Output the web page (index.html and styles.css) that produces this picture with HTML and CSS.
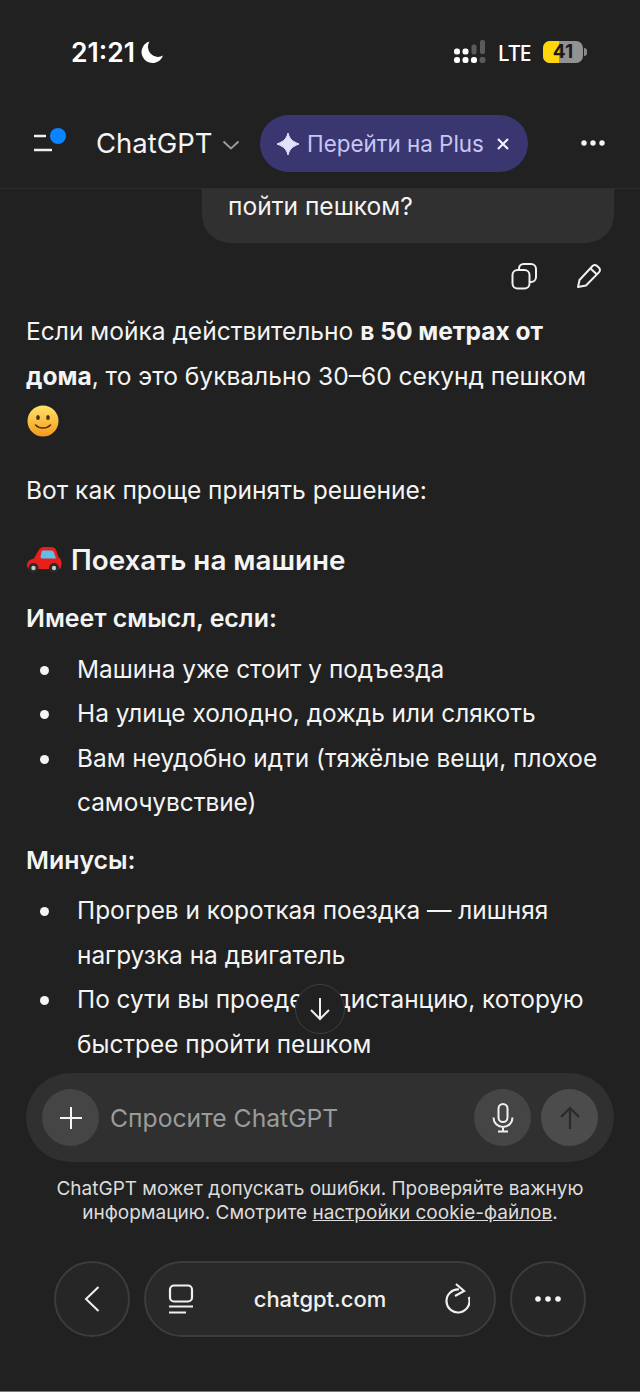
FILE: index.html
```html
<!DOCTYPE html>
<html lang="ru">
<head>
    <meta charset="UTF-8">
    <meta name="viewport" content="width=device-width, initial-scale=1.0">
    <title>ChatGPT</title>
    <link rel="stylesheet" href="styles.css">
</head>
<body>
    <div class="status-bar">
        <div class="status-left">
            <span class="status-time">21:21</span>
            <svg class="moon" width="24" height="24" viewBox="0 0 24 24"><path d="M9.500 1.500A11 11 0 1 0 23 15.500 10 10 0 0 1 9.500 1.500z" fill="#fff"/></svg>
        </div>
        <div class="status-right">
            <svg width="32" height="24" viewBox="0 0 32 24">
                <g fill="#fff">
                    <rect x="0" y="8.500" width="6" height="6" rx="2.500"/><rect x="0" y="17" width="6" height="6" rx="2.500"/>
                    <rect x="8.500" y="8.500" width="6" height="6" rx="2.500"/><rect x="8.500" y="17" width="6" height="6" rx="2.500"/>
                    <rect x="17" y="17" width="6" height="6" rx="2.500"/>
                </g>
                <g fill="#5a5a5a">
                    <rect x="17.500" y="4.500" width="5" height="10" rx="2"/>
                    <rect x="26" y="0" width="5" height="14" rx="2"/>
                    <rect x="25.500" y="17" width="6" height="6" rx="2.500"/>
                </g>
            </svg>
            <span class="status-lte">LTE</span>
            <div class="battery">
                <div class="battery-body"><div class="battery-fill"></div><span class="battery-num">41</span></div>
                <div class="battery-tip"></div>
            </div>
        </div>
    </div>

    <header class="top-bar">
        <div class="menu-btn">
            <svg width="34" height="30" viewBox="0 0 34 30">
                <path d="M0 9h12M0 23h18" stroke="#f0f0f0" stroke-width="2.400" fill="none"/>
                <circle cx="24" cy="9" r="8" fill="#0a84ff"/>
            </svg>
        </div>
        <div class="model-name">ChatGPT</div>
        <svg class="chevron" width="18" height="10" viewBox="0 0 18 10"><path d="M1.500 1.500 9 8.500l7.500-7" stroke="#9a9a9a" stroke-width="2" fill="none"/></svg>
        <div class="plus-pill">
            <svg width="22" height="22" viewBox="0 0 22 22"><path d="M11 0c1.500 5.500 3.500 8 11 11-7.500 3-9.500 5.500-11 11-1.500-5.500-3.500-8-11-11 7.500-3 9.500-5.500 11-11z" fill="#e2e0fb" stroke="#e2e0fb" stroke-width="1" stroke-linejoin="round"/></svg>
            <span class="plus-text">Перейти на Plus</span>
            <svg class="plus-close" width="12" height="12" viewBox="0 0 12 12"><path d="M1 1l10 10M11 1 1 11" stroke="#f2f1ff" stroke-width="2.200"/></svg>
        </div>
        <svg class="more" width="24" height="6" viewBox="0 0 24 6"><g fill="#f5f5f5"><circle cx="3" cy="3" r="2.700"/><circle cx="12" cy="3" r="2.700"/><circle cx="21" cy="3" r="2.700"/></g></svg>
    </header>

    <main class="chat">
        <div class="bubble">пойти пешком?</div>
        <div class="msg-actions">
            <svg width="27" height="28" viewBox="0 0 27 28" fill="none" stroke="#f0f0f0" stroke-width="2">
                <rect x="1.500" y="8" width="17" height="18.500" rx="5"/>
                <path d="M8 8V6.500A4.500 4.500 0 0 1 12.500 2H20a5 5 0 0 1 5 5v8a5 5 0 0 1-5 5h-1.500"/>
            </svg>
            <svg width="26" height="26" viewBox="0 0 26 26" fill="none" stroke="#f0f0f0" stroke-width="2" stroke-linejoin="round">
                <path d="M2 24l1.500-7L16.500 3a3 3 0 0 1 4.300-.2l2.200 2a3 3 0 0 1 .1 4.300L10 22.500z"/>
                <path d="M14.500 5.500l6.500 6"/>
            </svg>
        </div>

        <p class="para">Если мойка действительно <strong>в 50 метрах от дома</strong>, то это буквально 30–60 секунд пешком<br>
            <svg class="emoji" width="32" height="32" viewBox="0 0 32 32">
                <defs>
                    <linearGradient id="smileFace" x1="0" y1="0" x2="0" y2="1">
                        <stop offset="0" stop-color="#ffe36b"/>
                        <stop offset="1" stop-color="#f59a1c"/>
                    </linearGradient>
                </defs>
                <circle cx="16" cy="16" r="15.500" fill="url(#smileFace)"/>
                <ellipse cx="11" cy="12.500" rx="1.800" ry="2.600" fill="#4a2f10"/>
                <ellipse cx="21" cy="12.500" rx="1.800" ry="2.600" fill="#4a2f10"/>
                <path d="M8.500 20c4 4 11 4 15 0" stroke="#4a2f10" stroke-width="1.500" fill="none" stroke-linecap="round"/>
            </svg>
        </p>

        <p class="para para-gap">Вот как проще принять решение:</p>

        <h3 class="section-title">
            <svg class="car" width="36" height="28" viewBox="0 0 36 28">
                <path d="M1 19c0-3.500 2.500-5.500 7-6.500l4.500-8C13.500 2.500 15.500 1 18 1h7c3 0 4.500 1.500 5.500 4l2 6c2 1.500 3 3.500 3 6.500 0 3.500-1 5.500-3 5.500H4c-2 0-3-2-3-4z" fill="#e8201c"/>
                <path d="M17 4.500h8c1.500 0 2.500.7 3 2l2 6H15.500l-1-1.500L15.500 6c.3-1 .8-1.500 1.500-1.500z" fill="#5cc0e8"/>
                <circle cx="7.500" cy="22" r="5" fill="#2a2a2a"/><circle cx="7.500" cy="22" r="2.200" fill="#c8c8c8"/>
                <circle cx="28" cy="22" r="5" fill="#2a2a2a"/><circle cx="28" cy="22" r="2.200" fill="#c8c8c8"/>
            </svg>
            Поехать на машине
        </h3>

        <p class="label">Имеет смысл, если:</p>
        <ul class="list">
            <li>Машина уже стоит у подъезда</li>
            <li>На улице холодно, дождь или слякоть</li>
            <li>Вам неудобно идти (тяжёлые вещи, плохое самочувствие)</li>
        </ul>

        <p class="label label-next">Минусы:</p>
        <ul class="list">
            <li>Прогрев и короткая поездка — лишняя нагрузка на двигатель</li>
            <li>По сути вы проедете дистанцию, которую быстрее пройти пешком</li>
        </ul>

        <div class="scroll-down">
            <svg width="22" height="24" viewBox="0 0 22 24" fill="none" stroke="#f0f0f0" stroke-width="2"><path d="M11 1v21M2 13l9 9 9-9"/></svg>
        </div>
    </main>

    <div class="composer">
        <div class="round-btn">
            <svg width="24" height="24" viewBox="0 0 24 24"><path d="M12 1v22M1 12h22" stroke="#f5f5f5" stroke-width="2"/></svg>
        </div>
        <div class="placeholder">Спросите ChatGPT</div>
        <div class="round-btn">
            <svg width="22" height="30" viewBox="0 0 22 30" fill="none" stroke="#f0f0f0" stroke-width="2">
                <rect x="6.500" y="1" width="9" height="18" rx="4.500"/>
                <path d="M1.500 14.500a9.500 9.500 0 0 0 19 0M11 24v4M6 28.500h10"/>
            </svg>
        </div>
        <div class="round-btn send-btn">
            <svg width="22" height="24" viewBox="0 0 22 24" fill="none" stroke="#2a2a2a" stroke-width="2.200"><path d="M11 23V2M2 11l9-9 9 9"/></svg>
        </div>
    </div>

    <p class="disclaimer">ChatGPT может допускать ошибки. Проверяйте важную информацию. Смотрите <a href="#">настройки cookie-файлов</a>.</p>

    <nav class="browser-bar">
        <div class="browser-circle">
            <svg width="16" height="26" viewBox="0 0 16 26" fill="none" stroke="#f0f0f0" stroke-width="2"><path d="M14.500 1 2 13l12.500 12"/></svg>
        </div>
        <div class="url-pill">
            <svg width="26" height="30" viewBox="0 0 26 30" fill="none" stroke="#f0f0f0" stroke-width="2.200">
                <rect x="2" y="1.500" width="22" height="16" rx="4"/>
                <path d="M1 22.500h24M1 28.500h17"/>
            </svg>
            <span class="url-text">chatgpt.com</span>
            <svg width="26" height="32" viewBox="0 0 26 32" fill="none" stroke="#f0f0f0" stroke-width="2.200">
                <path d="M15 6.500A11.500 11.500 0 1 0 24.800 14"/>
                <path d="M12 1l8 7-9 5"/>
            </svg>
        </div>
        <div class="browser-circle">
            <svg width="26" height="6" viewBox="0 0 26 6"><g fill="#f5f5f5"><circle cx="3" cy="3" r="2.800"/><circle cx="13" cy="3" r="2.800"/><circle cx="23" cy="3" r="2.800"/></g></svg>
        </div>
    </nav>
</body>
</html>
```

FILE: styles.css
```css
* {
    box-sizing: border-box;
}
body {
    margin: 0;
    width: 640px;
    height: 1392px;
    display: flex;
    flex-direction: column;
    overflow: hidden;
    background-color: #212121;
    color: #f4f4f4;
    font-family: Inter, "Noto Sans", sans-serif;
    border-bottom: 1px solid #777;
}

/* status bar */
.status-bar {
    height: 100px;
    flex: none;
    display: flex;
    justify-content: space-between;
    align-items: flex-start;
    padding: 35px 53px 0 71px;
}
.status-left {
    display: flex;
    align-items: center;
    gap: 5px;
}
.status-time {
    font-size: 26.500px;
    line-height: 34px;
    font-weight: 600;
    color: #fff;
}
.moon {
    display: block;
}
.status-right {
    display: flex;
    align-items: center;
    gap: 12px;
    height: 34px;
}
.status-lte {
    font-size: 21.500px;
    font-weight: 500;
    letter-spacing: -0.600px;
    color: #fff;
    font-family: "Noto Sans", sans-serif;
}
.battery {
    display: flex;
    align-items: center;
    gap: 1px;
}
.battery-body {
    position: relative;
    width: 40px;
    height: 22px;
    border-radius: 7px;
    overflow: hidden;
    background-color: #929292;
    text-align: center;
}
.battery-fill {
    width: 16px;
    height: 22px;
    background-color: #ffd60a;
}
.battery-num {
    position: absolute;
    top: 0;
    left: 0;
    width: 100%;
    font-size: 19px;
    line-height: 22px;
    font-weight: 700;
    color: #1a1a1a;
}
.battery-tip {
    width: 3px;
    height: 8px;
    background-color: #8a8a8a;
    border-radius: 0 3px 3px 0;
}

/* chat header */
.top-bar {
    height: 89px;
    flex: none;
    display: flex;
    align-items: flex-start;
    padding: 15px 0 0 34px;
    border-bottom: 1px solid #2c2c2c;
}
.menu-btn {
    width: 62px;
    height: 57px;
    padding-top: 12px;
}
.menu-btn svg {
    display: block;
}
.model-name {
    width: 115px;
    font-size: 27.500px;
    line-height: 57px;
    white-space: nowrap;
    color: #f4f4f4;
}
.chevron {
    margin: 25px 0 0 11px;
}
.plus-pill {
    width: 268px;
    height: 57px;
    margin-left: 20px;
    border-radius: 29px;
    background-color: #3a3670;
    display: flex;
    align-items: center;
    padding-left: 17px;
}
.plus-text {
    margin-left: 8px;
    font-size: 22.400px;
    white-space: nowrap;
    color: #c8c6f4;
}
.plus-close {
    margin-left: 13px;
}
.more {
    margin: 25px 0 0 53px;
}

/* messages */
.chat {
    position: relative;
    flex: 1;
    min-height: 0;
    overflow: hidden;
    padding: 0 26px;
    font-size: 24.550px;
    line-height: 44.500px;
}
.bubble {
    margin-left: 176px;
    height: 54px;
    padding: 0 26px;
    line-height: 34px;
    background-color: #303030;
    border-radius: 0 0 28px 28px;
}
.msg-actions {
    height: 65px;
    display: flex;
    justify-content: flex-end;
    align-items: center;
    gap: 38px;
    padding: 0 12px 0 0;
}
.msg-actions svg {
    display: block;
}
.para {
    margin: 0;
    padding-top: 1px;
}
.para-gap {
    margin-top: 24px;
}
.emoji {
    vertical-align: -8px;
    margin-left: 1px;
}
.section-title {
    margin: 26px 0 0;
    font-size: 27.800px;
    line-height: 44px;
    font-weight: 600;
    display: flex;
    align-items: center;
    gap: 9px;
}
.label {
    margin: 14px 0 0;
    font-size: 24.900px;
    font-weight: 600;
}
.label-next {
    margin-top: 13px;
}
.list {
    margin: 6px 0 0;
    padding: 0 0 0 51px;
    font-size: 24.400px;
    list-style: none;
}
.list li::before {
    content: "";
    display: inline-block;
    width: 9px;
    height: 9px;
    margin-left: -37.500px;
    margin-right: 28.500px;
    vertical-align: 3px;
    border-radius: 50%;
    background-color: #f4f4f4;
}
.scroll-down {
    position: absolute;
    top: 795px;
    left: 295px;
    width: 50px;
    height: 50px;
    border-radius: 50%;
    border: 1px solid #3f3f3f;
    background-color: #212121;
    display: flex;
    align-items: center;
    justify-content: center;
}

/* input */
.composer {
    flex: none;
    height: 89px;
    margin: 0 26px;
    border-radius: 45px;
    background-color: #303030;
    display: flex;
    align-items: center;
    padding: 0 16px;
    gap: 10px;
}
.round-btn {
    width: 57px;
    height: 57px;
    flex: none;
    border-radius: 50%;
    background-color: #454545;
    display: flex;
    align-items: center;
    justify-content: center;
}
.placeholder {
    flex: 1;
    margin-left: 1px;
    font-size: 24.700px;
    color: #9b9b9b;
}
.send-btn {
    background-color: #4c4c4c;
}
.disclaimer {
    flex: none;
    margin: 15px auto 0;
    width: 590px;
    font-size: 19px;
    line-height: 23.500px;
    text-align: center;
    color: #dcdcdc;
}
.disclaimer a {
    color: inherit;
}

/* browser toolbar */
.browser-bar {
    flex: none;
    height: 167px;
    padding: 37px 54px 0;
    display: flex;
    align-items: flex-start;
    gap: 14px;
}
.browser-circle {
    width: 76px;
    height: 76px;
    flex: none;
    border-radius: 50%;
    border: 2px solid #3c3c3c;
    background-color: #262626;
    display: flex;
    align-items: center;
    justify-content: center;
}
.url-pill {
    flex: 1;
    height: 76px;
    border-radius: 38px;
    border: 2px solid #3c3c3c;
    background-color: #292929;
    display: flex;
    align-items: center;
    justify-content: space-between;
    padding: 0 24px 0 22px;
}
.url-text {
    margin-left: 2px;
    font-size: 22px;
    font-weight: 500;
    color: #f0f0f0;
}
```
